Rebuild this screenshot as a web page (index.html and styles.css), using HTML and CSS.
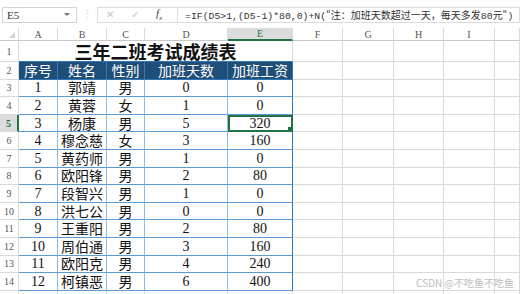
FILE: index.html
```html
<!DOCTYPE html>
<html lang="zh-CN">
<head>
  <meta charset="UTF-8" />
  <title>三年二班考试成绩表</title>
  <link rel="stylesheet" href="styles.css">
</head>
<body>
  <div class="formula-bar">
    <div class="name-box"><span>E5</span><span class="caret"></span></div>
    <div class="grip">⋮</div>
    <div class="fx-box">
      <span class="btn">✕</span>
      <span class="btn">✓</span>
      <span class="fx">f<sub>x</sub></span>
    </div>
    <div class="formula">=IF(D5&gt;1,(D5-1)*80,0)+N(<span class="cjk">"注：加班天数超过一天，每天多发</span>80<span class="cjk">元"</span>)</div>
  </div>

  <table class="sheet">
    <colgroup>
      <col style="width:19px"><col style="width:39px"><col style="width:49px"><col style="width:38px">
      <col style="width:83px"><col style="width:65px"><col style="width:50px"><col style="width:51px">
      <col style="width:50px"><col style="width:51px"><col>
    </colgroup>
    <tr class="col-head">
      <th class="corner"><span class="tri"></span></th>
      <th>A</th><th>B</th><th>C</th><th>D</th><th class="sel">E</th>
      <th>F</th><th>G</th><th>H</th><th>I</th><th></th>
    </tr>
    <tr class="title-row">
      <th class="rh">1</th>
      <td colspan="5" class="title">三年二班考试成绩表</td>
      <td></td><td></td><td></td><td></td><td></td>
    </tr>
    <tr class="head-row">
      <th class="rh">2</th>
      <td class="h">序号</td><td class="h">姓名</td><td class="h">性别</td><td class="h">加班天数</td><td class="h last">加班工资</td>
      <td></td><td></td><td></td><td></td><td></td>
    </tr>
    <tr>
      <th class="rh">3</th>
      <td class="d num">1</td><td class="d">郭靖</td><td class="d">男</td><td class="d num">0</td><td class="d num last">0</td>
      <td></td><td></td><td></td><td></td><td></td>
    </tr>
    <tr>
      <th class="rh">4</th>
      <td class="d num">2</td><td class="d">黄蓉</td><td class="d">女</td><td class="d num">1</td><td class="d num last">0</td>
      <td></td><td></td><td></td><td></td><td></td>
    </tr>
    <tr>
      <th class="rh active">5</th>
      <td class="d num">3</td><td class="d">杨康</td><td class="d">男</td><td class="d num">5</td><td class="d num last current">320</td>
      <td></td><td></td><td></td><td></td><td></td>
    </tr>
    <tr>
      <th class="rh">6</th>
      <td class="d num">4</td><td class="d">穆念慈</td><td class="d">女</td><td class="d num">3</td><td class="d num last">160</td>
      <td></td><td></td><td></td><td></td><td></td>
    </tr>
    <tr>
      <th class="rh">7</th>
      <td class="d num">5</td><td class="d">黄药师</td><td class="d">男</td><td class="d num">1</td><td class="d num last">0</td>
      <td></td><td></td><td></td><td></td><td></td>
    </tr>
    <tr>
      <th class="rh">8</th>
      <td class="d num">6</td><td class="d">欧阳锋</td><td class="d">男</td><td class="d num">2</td><td class="d num last">80</td>
      <td></td><td></td><td></td><td></td><td></td>
    </tr>
    <tr>
      <th class="rh">9</th>
      <td class="d num">7</td><td class="d">段智兴</td><td class="d">男</td><td class="d num">1</td><td class="d num last">0</td>
      <td></td><td></td><td></td><td></td><td></td>
    </tr>
    <tr>
      <th class="rh">10</th>
      <td class="d num">8</td><td class="d">洪七公</td><td class="d">男</td><td class="d num">0</td><td class="d num last">0</td>
      <td></td><td></td><td></td><td></td><td></td>
    </tr>
    <tr>
      <th class="rh">11</th>
      <td class="d num">9</td><td class="d">王重阳</td><td class="d">男</td><td class="d num">2</td><td class="d num last">80</td>
      <td></td><td></td><td></td><td></td><td></td>
    </tr>
    <tr>
      <th class="rh">12</th>
      <td class="d num">10</td><td class="d">周伯通</td><td class="d">男</td><td class="d num">3</td><td class="d num last">160</td>
      <td></td><td></td><td></td><td></td><td></td>
    </tr>
    <tr>
      <th class="rh">13</th>
      <td class="d num">11</td><td class="d">欧阳克</td><td class="d">男</td><td class="d num">4</td><td class="d num last">240</td>
      <td></td><td></td><td></td><td></td><td></td>
    </tr>
    <tr>
      <th class="rh">14</th>
      <td class="d num">12</td><td class="d">柯镇恶</td><td class="d">男</td><td class="d num">6</td><td class="d num last">400</td>
      <td></td><td></td><td></td><td></td><td></td>
    </tr>
    <tr>
      <th class="rh"></th>
      <td></td><td></td><td></td><td></td><td></td>
      <td></td><td></td><td></td><td></td><td></td>
    </tr>
  </table>

  <div class="watermark">CSDN @不吃鱼不吃鱼</div>
</body>
</html>
```

FILE: styles.css
```css
body {
  margin: 0;
  width: 520px;
  height: 294px;
  overflow: hidden;
  background: #fff;
  font-family: "Liberation Serif", "Noto Sans CJK SC", serif;
  position: relative;
}

/* formula bar */
.formula-bar {
  display: flex;
  align-items: center;
  height: 28px;
  padding-top: 1px;
  box-sizing: border-box;
}
.name-box {
  display: flex;
  align-items: center;
  justify-content: space-between;
  width: 75px;
  height: 16px;
  margin-left: 2px;
  border: 1px solid #d4d4d4;
  box-sizing: border-box;
  padding: 0 6px 0 4px;
  font-size: 11px;
  color: #333;
}
.caret {
  width: 0;
  height: 0;
  border-left: 3px solid transparent;
  border-right: 3px solid transparent;
  border-top: 3px solid #777;
}
.grip {
  width: 20px;
  text-align: center;
  color: #c8c8c8;
  font-size: 11px;
}
.fx-box {
  display: flex;
  align-items: center;
  width: 80px;
  height: 16px;
  border: 1px solid #dcdcdc;
  border-right: none;
  box-sizing: border-box;
  padding-left: 8px;
}
.btn {
  width: 25px;
  color: #c4c4c4;
  font-size: 10px;
  font-family: "DejaVu Sans", sans-serif;
}
.fx {
  font-style: italic;
  font-size: 11px;
  color: #444;
}
.fx sub {
  font-size: 7px;
}
.formula {
  flex: 1;
  height: 16px;
  line-height: 14px;
  border: 1px solid #dcdcdc;
  box-sizing: border-box;
  padding-left: 7px;
  font-family: "Liberation Mono", monospace;
  font-size: 9.8px;
  color: #333;
  white-space: nowrap;
  overflow: hidden;
}
.formula .cjk {
  font-family: "Noto Sans CJK SC", sans-serif;
  font-size: 10px;
}

/* grid */
.sheet {
  border-collapse: separate;
  border-spacing: 0;
  table-layout: fixed;
  width: 520px;
}
.sheet th,
.sheet td {
  padding: 0;
  border-right: 1px solid #dadada;
  border-bottom: 1px solid #dadada;
  text-align: center;
  vertical-align: middle;
  white-space: nowrap;
  line-height: 15px;
}
.sheet tr {
  height: 17.6px;
}
.col-head {
  height: 13px !important;
}
.col-head th {
  font-weight: normal;
  font-size: 10px;
  line-height: 11px;
  color: #555;
  border-bottom-color: #c8c8c8;
}
.col-head th.sel {
  background: #dcdcdc;
  border-bottom: 2px solid #217346;
  color: #217346;
}
.corner {
  position: relative;
}
.tri {
  position: absolute;
  right: 3px;
  bottom: 2px;
  border-left: 6px solid transparent;
  border-bottom: 6px solid #d2d2d2;
}
.rh {
  font-weight: normal;
  font-size: 10px;
  color: #555;
}
.rh.active {
  background: #dcdcdc;
  color: #217346;
  font-weight: bold;
  border-right: 2px solid #217346;
}
.title-row {
  height: 21px !important;
}
.title {
  font-family: "Noto Sans CJK SC", sans-serif;
  font-weight: bold;
  font-size: 18px;
  line-height: 19px;
  color: #111;
  border-bottom-color: #2e75b6 !important;
}
.sheet td.h {
  background: #1f4e78;
  color: #fff;
  font-family: "Noto Sans CJK SC", sans-serif;
  font-size: 14px;
  border-right-color: #3f7ab5;
  border-bottom-color: #2e75b6;
}
.sheet td.d {
  font-family: "Noto Sans CJK SC", sans-serif;
  font-size: 14px;
  color: #111;
  border-right-color: #8dbbe6;
  border-bottom-color: #5b9bd5;
}
.sheet td.num {
  font-family: "Liberation Serif", serif;
  font-size: 14px;
}
.sheet td.last {
  border-right-color: #2e75b6;
}
.sheet td.current {
  position: relative;
  outline: 2px solid #217346;
  outline-offset: -2px;
}
.sheet td.current::after {
  content: "";
  position: absolute;
  right: -1px;
  bottom: -1px;
  width: 5px;
  height: 5px;
  background: #217346;
}

.watermark {
  position: absolute;
  right: 6px;
  bottom: 4px;
  font-family: "Noto Sans CJK SC", sans-serif;
  font-size: 10px;
  color: #bdbdbd;
}
```
